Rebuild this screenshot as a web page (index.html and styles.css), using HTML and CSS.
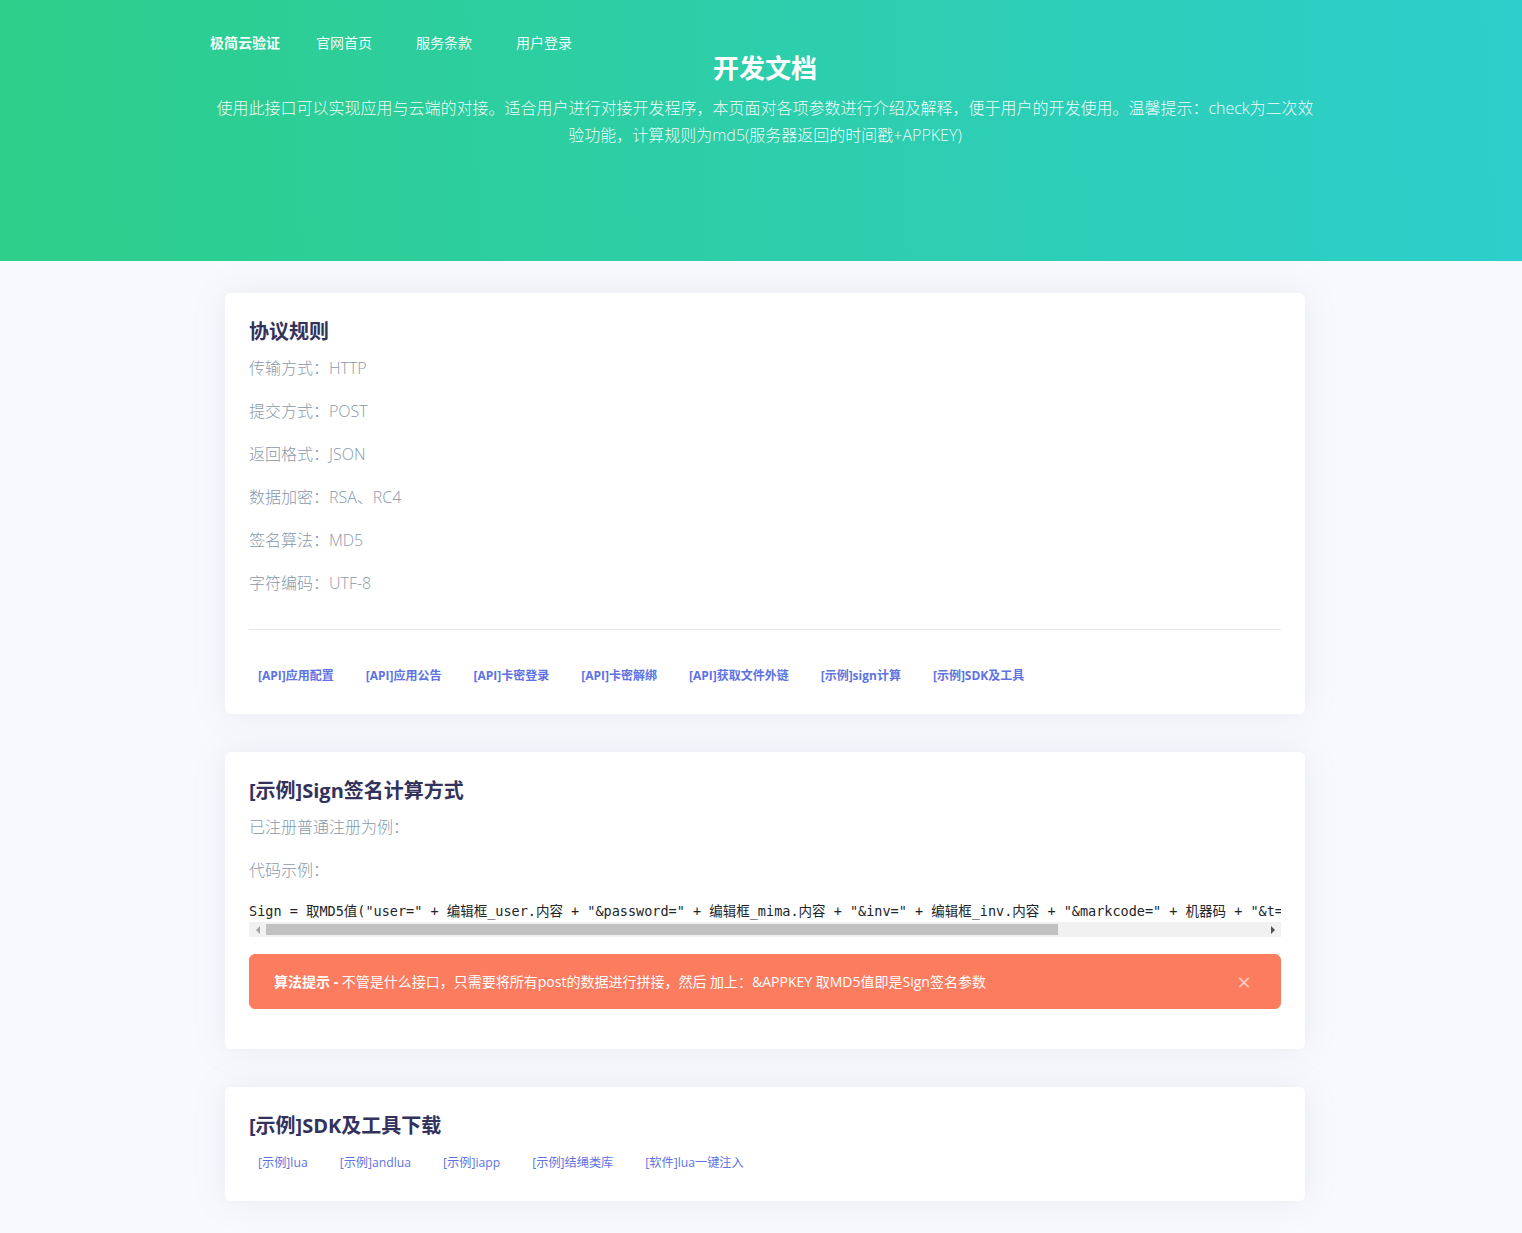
FILE: index.html
```html
<!DOCTYPE html>
<html lang="zh-CN">
<head>
    <meta charset="UTF-8">
    <meta name="viewport" content="width=device-width, initial-scale=1.0">
    <title>开发文档 - 极简云验证</title>
    <link rel="stylesheet" href="styles.css">
</head>
<body>
    <div class="header">
        <div class="header-inner">
            <div class="navbar">
                <a class="brand" href="#">极简云验证</a>
                <a class="nav-link" href="#">官网首页</a>
                <a class="nav-link" href="#">服务条款</a>
                <a class="nav-link" href="#">用户登录</a>
            </div>
            <h1 class="title">开发文档</h1>
            <p class="lead">使用此接口可以实现应用与云端的对接。适合用户进行对接开发程序，本页面对各项参数进行介绍及解释，便于用户的开发使用。温馨提示：check为二次效验功能，计算规则为md5(服务器返回的时间戳+APPKEY)</p>
        </div>
    </div>

    <div class="main">
        <div class="card">
            <h3>协议规则</h3>
            <p>传输方式：HTTP</p>
            <p>提交方式：POST</p>
            <p>返回格式：JSON</p>
            <p>数据加密：RSA、RC4</p>
            <p>签名算法：MD5</p>
            <p class="last">字符编码：UTF-8</p>
            <hr>
            <div class="doc-links">
                <a href="#">[API]应用配置</a>
                <a href="#">[API]应用公告</a>
                <a href="#">[API]卡密登录</a>
                <a href="#">[API]卡密解绑</a>
                <a href="#">[API]获取文件外链</a>
                <a href="#">[示例]sign计算</a>
                <a href="#">[示例]SDK及工具</a>
            </div>
        </div>

        <div class="card">
            <h3>[示例]Sign签名计算方式</h3>
            <p>已注册普通注册为例：</p>
            <p>代码示例：</p>
            <div class="code-box">
                <pre class="code">Sign = 取MD5值("user=" + 编辑框_user.内容 + "&amp;password=" + 编辑框_mima.内容 + "&amp;inv=" + 编辑框_inv.内容 + "&amp;markcode=" + 机器码 + "&amp;t=" + 时间戳 + APPKEY)</pre>
                <!-- 横向滚动条 -->
                <div class="hscroll">
                    <span class="arrow arrow-left"></span>
                    <span class="track"><span class="thumb"></span></span>
                    <span class="arrow arrow-right"></span>
                </div>
            </div>
            <div class="alert">
                <span><strong>算法提示 - </strong>不管是什么接口，只需要将所有post的数据进行拼接，然后 加上：&amp;APPKEY 取MD5值即是Sign签名参数</span>
                <span class="close">&times;</span>
            </div>
        </div>

        <div class="card">
            <h3>[示例]SDK及工具下载</h3>
            <div class="doc-links light">
                <a href="#">[示例]lua</a>
                <a href="#">[示例]andlua</a>
                <a href="#">[示例]iapp</a>
                <a href="#">[示例]结绳类库</a>
                <a href="#">[软件]lua一键注入</a>
            </div>
        </div>
    </div>
</body>
</html>
```

FILE: styles.css
```css
body {
    margin: 0;
    background: #f8f9fe;
    font-family: "Open Sans", "Noto Sans CJK SC", sans-serif;
    color: #8898aa;
}
a { text-decoration: none; }

/* 顶部渐变区 */
.header {
    background: linear-gradient(87deg, #2dce89 0, #2dcecc 100%);
    height: 261px;
}
.header-inner {
    width: 1110px;
    margin: 0 auto;
    padding-top: 33px;
    position: relative;
    left: 4px;
    text-align: center;
}
.navbar {
    display: flex;
    align-items: center;
    height: 20px;
}
.navbar a {
    color: rgba(255, 255, 255, 0.95);
    font-size: 14px;
    line-height: 20px;
}
.brand {
    font-weight: 700;
    margin-right: 36px;
}
.nav-link { margin-right: 44px; }
.title {
    margin: 0;
    color: #fff;
    font-size: 26px;
    font-weight: 700;
    line-height: 30px;
}
.lead {
    margin: 12px 6px 0;
    color: rgba(255, 255, 255, 0.95);
    font-size: 16px;
    font-weight: 300;
    line-height: 27px;
}

/* 内容卡片 */
.main {
    width: 1080px;
    margin: 32px auto 0;
    position: relative;
    left: 4px;
}
.card {
    background: #fff;
    border-radius: 6px;
    box-shadow: 0 0 2rem 0 rgba(136, 152, 170, 0.15);
    padding: 24px;
    margin-bottom: 38px;
}
.card h3 {
    margin: 0 0 8px;
    color: #32325d;
    font-size: 20px;
    font-weight: 700;
    line-height: 30px;
}
.card p {
    margin: 0 0 16px;
    font-size: 16px;
    font-weight: 300;
    line-height: 27px;
}
.card p.last { margin-bottom: 0; }
hr {
    border: 0;
    border-top: 1px solid rgba(0, 0, 0, 0.1);
    margin: 32px 0;
}
.doc-links {
    display: flex;
    gap: 14px;
}
.doc-links a {
    color: #5e72e4;
    font-size: 12px;
    font-weight: 700;
    line-height: 28px;
    padding: 0 9px;
}
.doc-links.light a {
    font-weight: 400;
    font-size: 12.2px;
}

/* 代码行 */
.code-box { margin-bottom: 17px; }
.code {
    margin: 0;
    padding: 1px 0 0;
    font-family: "DejaVu Sans Mono", "Noto Sans CJK SC", monospace;
    font-size: 13.5px;
    line-height: 21px;
    color: #212529;
    white-space: pre;
    overflow: hidden;
}
.hscroll {
    display: flex;
    height: 15px;
    background: #f1f1f1;
}
.arrow {
    width: 17px;
    display: flex;
    align-items: center;
    justify-content: center;
}
.arrow::before {
    content: "";
    border-top: 4px solid transparent;
    border-bottom: 4px solid transparent;
}
.arrow-left::before { border-right: 4px solid #a3a3a3; }
.arrow-right::before { border-left: 4px solid #505050; }
.track {
    flex: 1;
    display: flex;
    align-items: center;
}
.thumb {
    width: 792px;
    height: 11px;
    background: #c1c1c1;
}

/* 提示框 */
.alert {
    display: flex;
    justify-content: space-between;
    align-items: center;
    background: #fc7c5f;
    border: 1px solid #fc7c5f;
    border-radius: 6px;
    padding: 16px 24px;
    margin-bottom: 16px;
    color: #fff;
    font-size: 14px;
    line-height: 21px;
}
.alert strong { font-weight: 700; }
.close {
    font-size: 24px;
    font-weight: 400;
    line-height: 21px;
    opacity: 0.6;
    margin-right: 5px;
}
```
